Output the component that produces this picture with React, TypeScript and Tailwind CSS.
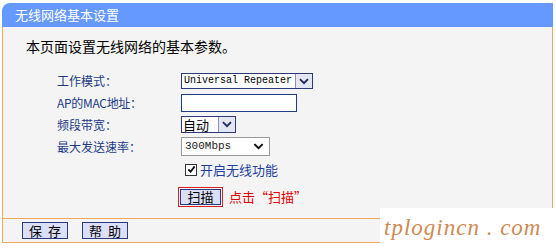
import React from "react";

const cjk = { fontFamily: '"Noto Sans CJK SC", "Noto Sans", sans-serif' };
const mono = { fontFamily: '"Liberation Mono", "DejaVu Sans Mono", monospace' };

function Chevron({ className = "" }: { className?: string }) {
  return (
    <svg className={className} viewBox="0 0 12 8" fill="none" stroke="currentColor" strokeWidth="2.2" strokeLinecap="square">
      <path d="M2 2l4 4 4-4" />
    </svg>
  );
}

function DropButton() {
  return (
    <div className="flex h-full w-[17px] shrink-0 items-center justify-center border-l border-[#8a92b8] bg-[#e4e6f2] text-[#1b2a5a]">
      <Chevron className="w-[10px] h-[7px]" />
    </div>
  );
}

function Row({ label, h, children, labelClass = "" }: { label?: string; h: string; children?: React.ReactNode; labelClass?: string }) {
  return (
    <div className={`flex items-center ${h}`}>
      <div className={`w-[178px] shrink-0 whitespace-nowrap pl-[54px] text-[12px] text-[#1c3a86] ${labelClass}`}>{label}</div>
      <div className="flex items-center">{children}</div>
    </div>
  );
}

export default function App() {
  return (
    <div className="relative w-[556px] h-[248px] overflow-hidden bg-white" style={cjk}>
      <div className="ml-[2px] mt-[3px] w-[551px]">
        {/* header */}
        <div className="flex h-[24px] items-center rounded-tl-[8px] bg-[#6699ff] pl-[13px] text-[13px] text-white">
          无线网络基本设置
        </div>

        {/* body */}
        <div className="h-[191px] border-x border-[#f0a95a] bg-[#f4f4f4]">
          <div className="pt-[10px] pl-[23px] text-[14px] leading-[18px] text-black">本页面设置无线网络的基本参数。</div>
          <div className="mt-[15px]">
            <Row label="工作模式：" h="h-[22px]">
              <div className="flex h-[16px] w-[132px] items-center border border-[#2c3a7c] bg-white">
                <div className="flex-1 pl-[2px] text-[10px] leading-none text-black" style={mono}>Universal Repeater</div>
                <DropButton />
              </div>
            </Row>
            <Row label="AP的MAC地址：" h="h-[22px]" labelClass="text-[11px] tracking-[-0.3px]">
              <div className="h-[18px] w-[116px] border border-[#1f3c88] bg-white" />
            </Row>
            <Row label="频段带宽：" h="h-[21px]">
              <div className="flex h-[17px] w-[55px] items-center border border-[#2c3a7c] bg-white">
                <div className="flex-1 pl-[1px] text-[13px] leading-none text-black">自动</div>
                <DropButton />
              </div>
            </Row>
            <Row label="最大发送速率：" h="h-[23px]">
              <div className="flex h-[19px] w-[89px] items-center border border-[#9a9a9a] bg-white pr-[5px]">
                <div className="flex-1 pl-[3px] text-[11px] leading-none text-[#222]" style={mono}>300Mbps</div>
                <Chevron className="w-[11px] h-[7px] text-[#111]" />
              </div>
            </Row>
            <Row h="h-[23px]">
              <div className="ml-[4px] flex items-center gap-[3px]">
                <div className="flex h-[12px] w-[12px] items-center justify-center border border-[#333] bg-white">
                  <svg viewBox="0 0 10 10" className="h-[9px] w-[9px]" fill="none" stroke="#111" strokeWidth="2">
                    <path d="M1.5 5l2.5 2.5 4.5-6" />
                  </svg>
                </div>
                <span className="text-[13px] text-[#1f3fa0]">开启无线功能</span>
              </div>
            </Row>
            <Row h="h-[32px]">
              <div className="-ml-[3px] flex items-center">
                <div className="border border-[#d92020] p-[1px]">
                  <div className="flex h-[16px] w-[41px] items-center justify-center border border-[#2a3a80] bg-[#dcdff8] text-[13px] text-black">扫描</div>
                </div>
                <span className="ml-[6px] text-[13px] text-[#e00000]">点击“扫描”</span>
              </div>
            </Row>
          </div>
        </div>

        {/* footer */}
        <div className="flex h-[25px] items-center gap-[14px] border border-[#f0a95a] bg-[#f4f4f4] pl-[19px]">
          <div className="flex h-[17px] w-[46px] items-center justify-center gap-[6px] border border-[#2a3a80] bg-[#dcdff8] text-[13px] text-black">
            <span>保</span>
            <span>存</span>
          </div>
          <div className="flex h-[17px] w-[46px] items-center justify-center gap-[6px] border border-[#2a3a80] bg-[#dcdff8] text-[13px] text-black">
            <span>帮</span>
            <span>助</span>
          </div>
        </div>
      </div>

      {/* watermark */}
      <div className="absolute left-[380px] top-[208px] flex h-[40px] w-[176px] items-center bg-white pl-[4px]">
        <span className="text-[23px] italic tracking-[1px] text-[#d08a55]" style={{ fontFamily: '"Liberation Serif", serif' }}>
          tplogincn . com
        </span>
      </div>
    </div>
  );
}
